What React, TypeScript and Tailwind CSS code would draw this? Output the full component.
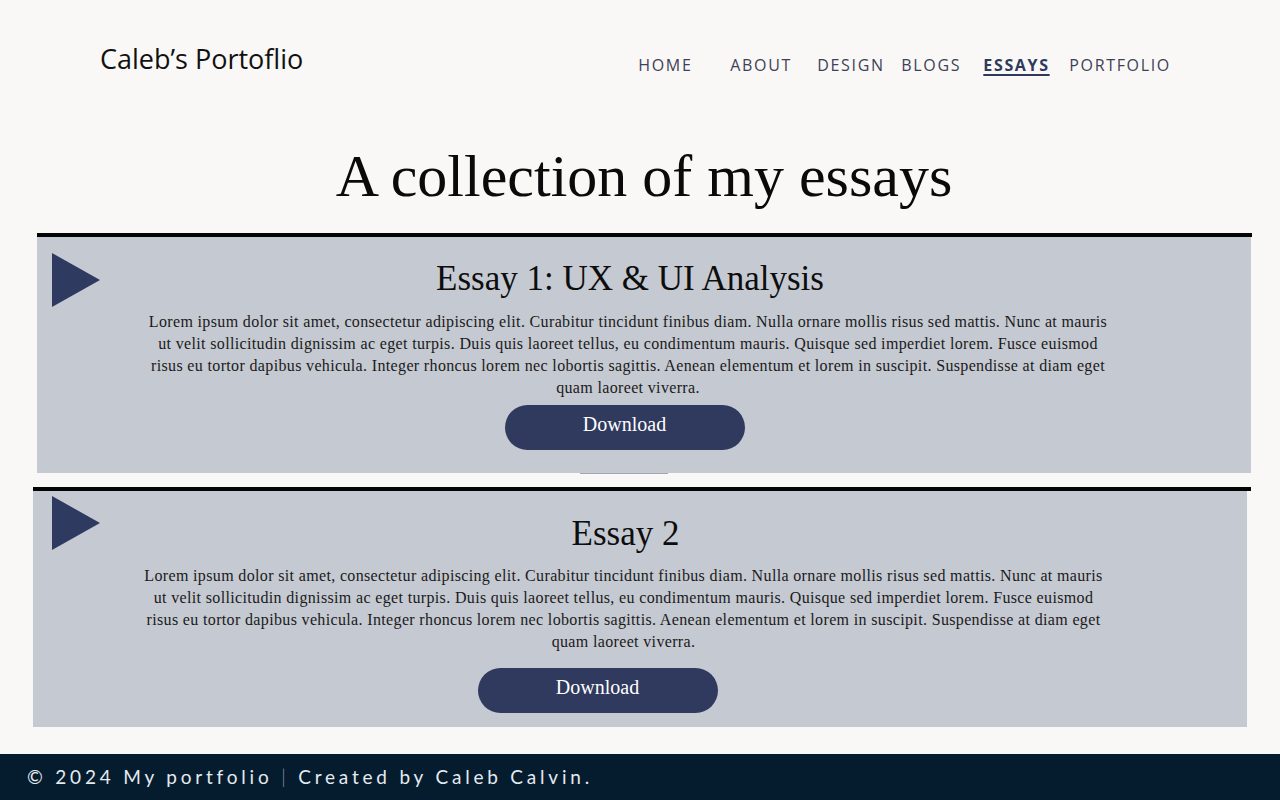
import React from "react";

const serif = { fontFamily: '"Liberation Serif", "Times New Roman", serif' };

function Triangle({ className }: { className: string }) {
  return (
    <svg width="48" height="54" viewBox="0 0 48 54" className={className}>
      <polygon points="0,0 48,27 0,54" fill="#2e3a5f" />
    </svg>
  );
}

const lines = [
  "Lorem ipsum dolor sit amet, consectetur adipiscing elit. Curabitur tincidunt finibus diam. Nulla ornare mollis risus sed mattis. Nunc at mauris",
  "ut velit sollicitudin dignissim ac eget turpis. Duis quis laoreet tellus, eu condimentum mauris. Quisque sed imperdiet lorem. Fusce euismod",
  "risus eu tortor dapibus vehicula. Integer rhoncus lorem nec lobortis sagittis. Aenean elementum et lorem in suscipit. Suspendisse at diam eget",
  "quam laoreet viverra.",
];

function Para({ className }: { className: string }) {
  return (
    <div
      className={"text-center text-[16px] leading-[22px] tracking-[0.35px] text-[#1a1a1a] " + className}
      style={serif}
    >
      {lines.map((l, i) => (
        <span key={i} className="block whitespace-nowrap">
          {l}
        </span>
      ))}
    </div>
  );
}

export default function App() {
  const nav = [
    { t: "HOME", w: "w-[92px]" },
    { t: "ABOUT", w: "w-[87px]" },
    { t: "DESIGN", w: "w-[84px]" },
    { t: "BLOGS", w: "w-[82px]" },
    { t: "ESSAYS", w: "w-[86px]", active: true },
    { t: "PORTFOLIO", w: "w-[120px]" },
  ];
  return (
    <div className="min-h-[800px] w-[1280px] bg-[#f9f8f6] flex flex-col overflow-hidden">
      {/* Header */}
      <div className="flex pt-[45px]" style={{ fontFamily: '"Open Sans", sans-serif' }}>
        <div className="ml-[100px] text-[27px] leading-[27px] text-[#111]">Caleb’s Portoflio</div>
        <div className="ml-[335px] mt-[9px] flex text-[16px] leading-[22px] tracking-[1.65px]">
          {nav.map((n) => (
            <div key={n.t} className={n.w + " shrink-0"}>
              <span
                className={
                  n.active
                    ? "font-bold text-[#2e3a5c] underline underline-offset-[3px] decoration-[1.5px]"
                    : "text-[#3d4157]"
                }
              >
                {n.t}
              </span>
            </div>
          ))}
        </div>
      </div>

      {/* Heading */}
      <h1 className="mt-[71px] text-center text-[60px] leading-[59px] text-[#0a0a0a] pl-[8px]" style={serif}>
        A collection of my essays
      </h1>

      {/* Card 1 */}
      <div className="mt-[27px] ml-[37px] w-[1215px]">
        <div className="h-[4px] w-[1215px] bg-[#050505]" />
        <div className="w-[1214px] bg-[#c5c9d1] flex pl-[15px]">
          <Triangle className="mt-[16px] shrink-0 self-start" />
          <div className="flex-1 flex flex-col items-center pr-[95px] pt-[22px] pb-[23px]">
            <div className="text-[35px] leading-[40px] text-[#0d0d0d] pl-[4px]" style={serif}>
              Essay 1: UX &amp; UI Analysis
            </div>
            <Para className="mt-[12px]" />
            <button
              className="mt-[6px] mr-[7px] h-[45px] w-[240px] rounded-full bg-[#2f3a5e] text-white text-[20px] pb-[7px]"
              style={serif}
            >
              Download
            </button>
          </div>
        </div>
      </div>
      <div className="ml-[580px] h-[1px] w-[88px] bg-[#a3a7ad]" />

      {/* Card 2 */}
      <div className="mt-[13px] ml-[33px] w-[1218px]">
        <div className="h-[4px] w-[1218px] bg-[#050505]" />
        <div className="w-[1214px] bg-[#c5c9d1] flex pl-[19px]">
          <Triangle className="mt-[5px] shrink-0 self-start" />
          <div className="flex-1 flex flex-col items-center pr-[100px] pt-[23px] pb-[14px]">
            <div className="text-[35px] leading-[40px] text-[#0d0d0d] pl-[4px]" style={serif}>
              Essay 2
            </div>
            <Para className="mt-[11px]" />
            <button
              className="mt-[15px] mr-[52px] h-[45px] w-[240px] rounded-full bg-[#2f3a5e] text-white text-[20px] pb-[7px]"
              style={serif}
            >
              Download
            </button>
          </div>
        </div>
      </div>

      {/* Footer */}
      <div className="mt-[27px] h-[46px] w-full bg-[#041c2e] flex items-center pl-[27px]">
        <span
          className="text-[19px] tracking-[3.8px] text-[#e4eaee] whitespace-nowrap"
          style={{ fontFamily: 'Lato, "Liberation Sans", sans-serif' }}
        >
          © 2024 My portfolio <span className="text-[#8a98a3] font-light">|</span> Created by Caleb Calvin.
        </span>
      </div>
    </div>
  );
}
